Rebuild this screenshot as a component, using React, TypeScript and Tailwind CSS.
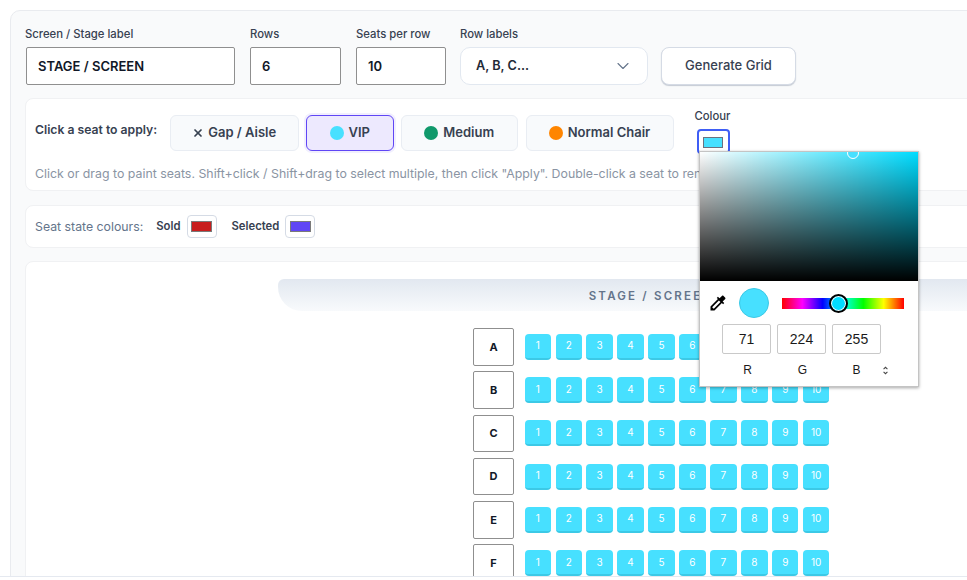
import React from 'react';
import { ChevronDown, X } from 'lucide-react';

const rowLetters = ['A', 'B', 'C', 'D', 'E', 'F'];
const seatNumbers = [1, 2, 3, 4, 5, 6, 7, 8, 9, 10];

const SeatRow: React.FC<{ letter: string }> = ({ letter }) => (
  <div className="flex items-center gap-[11px]">
    <div className="flex h-[37.6px] w-[41px] items-center justify-center rounded-[2px] border border-[#8f8f8f] bg-white pl-[1px] text-[11px] font-bold text-[#111827]">
      {letter}
    </div>
    <div className="flex gap-[4.55px]">
      {seatNumbers.map(n => (
        <div
          key={n}
          className="flex h-[26px] w-[26.4px] items-center justify-center rounded-[4px] border-b-2 border-[#3cc9e6] bg-[#47e0ff] text-[10px] font-normal text-white"
        >
          {n}
        </div>
      ))}
    </div>
  </div>
);

const ColourPopover: React.FC = () => (
  <div className="absolute left-[699px] top-[151px] z-10 h-[236px] w-[220px] border border-[#c4c4c4] bg-white font-['Liberation_Sans',sans-serif] shadow-[0_1px_3px_rgba(0,0,0,0.35)]">
    {/* Saturation / value area */}
    <div className="relative h-[129px] w-full overflow-hidden bg-[#00dcff]">
      <div className="absolute inset-0 bg-[linear-gradient(to_right,#ffffff,rgba(255,255,255,0))]" />
      <div className="absolute inset-0 bg-[linear-gradient(to_bottom,rgba(0,0,0,0),#000000)]" />
      <div className="absolute left-[147px] top-[-5px] h-[12px] w-[12px] rounded-full border border-white bg-[#47e0ff]" />
    </div>
    <div className="flex items-center pl-[8px] pt-[7px]">
      <svg viewBox="0 0 24 24" className="h-[20px] w-[20px] fill-black">
        <path d="M20.71 5.63l-2.34-2.34c-.39-.39-1.02-.39-1.41 0l-3.12 3.12-1.93-1.91-1.41 1.41 1.42 1.42L3 16.25V21h4.75l8.92-8.92 1.42 1.42 1.41-1.41-1.92-1.92 3.12-3.12c.4-.4.4-1.03.01-1.42zM6.92 19L5 17.08l8.06-8.06 1.92 1.92L6.92 19z" />
      </svg>
      <div className="ml-[11px] h-[30px] w-[30px] rounded-full border border-[#3cc9e6] bg-[#47e0ff]" />
      <div className="relative ml-[13px] h-[11px] w-[122px] bg-[linear-gradient(to_right,#ff0000,#ff00ff,#0000ff,#00ffff,#00ff00,#ffff00,#ff0000)]">
        <div className="absolute left-[47px] top-[-4px] h-[19px] w-[19px] rounded-full border-[2px] border-black bg-[#00dcff] shadow-[inset_0_0_0_1px_white]" />
      </div>
    </div>
    <div className="flex gap-[6px] pl-[22px] pt-[6px]">
      {['71', '224', '255'].map(v => (
        <div
          key={v}
          className="flex h-[30px] w-[49px] items-center justify-center rounded-[2px] border border-[#c9c9c9] text-[14px] text-[#1a1a1a]"
        >
          {v}
        </div>
      ))}
    </div>
    <div className="flex items-center pl-[22px] pt-[7px] text-[12px] font-normal text-[#1a1a1a]">
      <span className="w-[49px] pl-[2px] text-center">R</span>
      <span className="ml-[6px] w-[49px] pl-[2px] text-center">G</span>
      <span className="ml-[6px] w-[49px] text-center">B</span>
      <svg viewBox="0 0 10 14" className="ml-[1px] h-[9px] w-[7px] fill-none stroke-[#444] stroke-[1.6]">
        <path d="M2 5l3-3 3 3M2 9l3 3 3-3" />
      </svg>
    </div>
  </div>
);

const App: React.FC = () => {
  return (
    <div className="relative h-[580px] w-[967px] overflow-hidden bg-white font-['Inter',sans-serif]">
      <div className="ml-[10px] mt-[10px] w-[1282px] rounded-tl-[10px] border border-[#e9ebef] bg-[#f9fafb] pl-[14px] pr-[14px] pt-[15px]">
        {/* Grid settings */}
        <div className="flex items-end">
          <div className="w-[210px]">
            <label className="mb-[5px] block text-[11.3px] font-medium leading-[16px] text-[#374151]">Screen / Stage label</label>
            <div className="ml-[1px] flex h-[38px] items-center rounded-[2px] border border-[#8f8f8f] bg-white pl-[11px] pt-[1px] text-[13px] font-semibold text-[#111827]">
              STAGE / SCREEN
            </div>
          </div>
          <div className="ml-[15px] w-[91px]">
            <label className="mb-[5px] block text-[11.3px] font-medium leading-[16px] text-[#374151]">Rows</label>
            <div className="flex h-[38px] items-center rounded-[2px] border border-[#8f8f8f] bg-white pl-[11px] pt-[1px] text-[13px] font-semibold text-[#111827]">
              6
            </div>
          </div>
          <div className="ml-[15px] w-[90px]">
            <label className="mb-[5px] block text-[11.3px] font-medium leading-[16px] text-[#374151]">Seats per row</label>
            <div className="flex h-[38px] items-center rounded-[2px] border border-[#8f8f8f] bg-white pl-[11px] pt-[1px] text-[13px] font-semibold text-[#111827]">
              10
            </div>
          </div>
          <div className="ml-[14px] w-[188px]">
            <label className="mb-[5px] block text-[11.3px] font-medium leading-[16px] text-[#374151]">Row labels</label>
            <div className="flex h-[38px] items-center justify-between rounded-[10px] border border-[#e2e8f0] bg-white pl-[15px] pr-[14px] text-[12.7px] font-semibold text-[#1f2937]">
              A, B, C...
              <ChevronDown className="h-[20px] w-[20px] text-[#64748b]" strokeWidth={1.3} />
            </div>
          </div>
          <button className="ml-[13px] h-[38px] w-[135px] rounded-[8px] border border-[#d5dbe5] bg-white text-[13px] font-medium text-[#374151] shadow-[0_1px_1px_rgba(100,116,139,0.35)]">
            Generate Grid
          </button>
        </div>

        {/* Seat type picker */}
        <div className="mt-[13px] h-[93px] rounded-[8px] border border-[#f0f1f3] bg-white pl-[9px] pt-[16px]">
          <div className="flex items-start">
            <span className="mt-[7px] w-[135px] text-[12.2px] font-semibold leading-[16px] text-[#374151]">Click a seat to apply:</span>
            <div className="flex h-[36px] w-[128.5px] items-center justify-center gap-[4px] rounded-[6px] border border-[#e9edf3] bg-[#f8fafc] text-[13px] font-semibold text-[#374151]">
              <X className="h-[12px] w-[12px]" strokeWidth={3.5} />
              Gap / Aisle
            </div>
            <div className="ml-[7.5px] flex h-[36px] w-[87.5px] items-center justify-center gap-[5px] rounded-[6px] border border-[#6046f5] bg-[#ede9fe] text-[13px] font-semibold text-[#374151] shadow-[0_0_0_2px_#f1effe]">
              <span className="h-[14px] w-[14px] rounded-full bg-[#47e0ff]" />
              VIP
            </div>
            <div className="ml-[7.5px] flex h-[36px] w-[116.5px] items-center justify-center gap-[5px] rounded-[6px] border border-[#e9edf3] bg-[#f8fafc] text-[13px] font-semibold text-[#374151]">
              <span className="h-[14px] w-[14px] rounded-full bg-[#10996b]" />
              Medium
            </div>
            <div className="ml-[8px] flex h-[36px] w-[148px] items-center justify-center gap-[5px] rounded-[6px] border border-[#e9edf3] bg-[#f8fafc] text-[13px] font-semibold text-[#374151]">
              <span className="h-[14px] w-[14px] rounded-full bg-[#ff8500]" />
              Normal Chair
            </div>
            <div className="ml-[21px] mt-[-7px]">
              <div className="text-[11.3px] font-medium leading-[16px] text-[#374151]">Colour</div>
              <div className="ml-[2px] mt-[5px] flex h-[25px] w-[33px] items-start justify-center rounded-[4px] border-2 border-[#3f5ef5] bg-white pt-[6px]">
                <span className="h-[11px] w-[20px] border border-[#6b7280] bg-[#47e0ff]" />
              </div>
            </div>
          </div>
          <p className="mt-[11px] whitespace-nowrap text-[12.35px] leading-[18px] text-[#8a94a3]">
            Click or drag to paint seats. Shift+click / Shift+drag to select multiple, then click "Apply". Double-click a seat to rename it.
          </p>
        </div>

        {/* Seat state colours */}
        <div className="mt-[14px] flex h-[43px] items-center rounded-[8px] border border-[#f0f1f3] bg-white pl-[9px]">
          <span className="text-[12.3px] leading-[16px] text-[#64748b]">Seat state colours:</span>
          <span className="ml-[13px] text-[11.3px] font-semibold text-[#374151]">Sold</span>
          <div className="ml-[6px] flex h-[23px] w-[30px] items-center justify-center rounded-[4px] border border-[#d5dbe5] bg-white">
            <span className="h-[11px] w-[21px] border border-[#7a7a7a] bg-[#c81e1e]" />
          </div>
          <span className="ml-[15px] text-[11.3px] font-semibold text-[#374151]">Selected</span>
          <div className="ml-[6px] flex h-[23px] w-[30px] items-center justify-center rounded-[4px] border border-[#d5dbe5] bg-white">
            <span className="h-[11px] w-[21px] border border-[#7a7a7a] bg-[#6046f5]" />
          </div>
        </div>

        {/* Seat map */}
        <div className="mt-[13px] h-[400px] rounded-[8px] border border-[#f0f1f3] bg-white pt-[17px]">
          <div className="mx-auto flex h-[32px] w-[746px] items-center justify-center rounded-b-[24px] rounded-t-[6px] bg-gradient-to-b from-[#e2e8f0] to-[#f8fafc] pt-[3px] text-[11.5px] font-semibold tracking-[2.2px] text-[#64748b]">
            STAGE / SCREEN
          </div>
          <div className="mt-[17px] flex flex-col items-center gap-[5.7px]">
            {rowLetters.map(letter => (
              <SeatRow key={letter} letter={letter} />
            ))}
          </div>
        </div>
      </div>

      <ColourPopover />

      {/* Bottom edge of the page */}
      <div className="absolute bottom-0 left-0 h-[4px] w-full border-t border-[#e5e9f0] bg-white" />
    </div>
  );
};

export default App;
